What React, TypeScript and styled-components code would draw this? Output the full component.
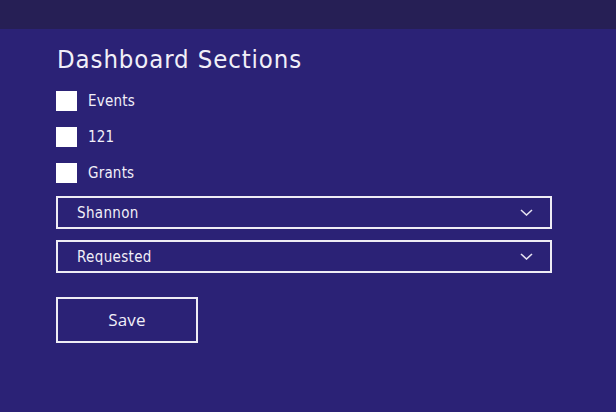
import React from "react";
import styled, { createGlobalStyle } from "styled-components";

const Global = createGlobalStyle`
  html, body { margin: 0; padding: 0; background: #2b2276; }
  body { font-family: "DejaVu Sans Condensed", "DejaVu Sans", sans-serif; }
  * { box-sizing: border-box; }
`;

const Page = styled.div`
  width: 616px;
  height: 412px;
  background: #2b2276;
  display: flex;
  flex-direction: column;
  overflow: hidden;
`;

const TopBar = styled.div`
  height: 29px;
  background: #261f55;
  flex-shrink: 0;
`;

const Content = styled.div`
  padding: 15px 0 0 56px;
  display: flex;
  flex-direction: column;
  width: 552px;
`;

const Title = styled.h1`
  margin: 0 0 0 1px;
  font-family: "DejaVu Sans Condensed", "DejaVu Sans", sans-serif;
  font-weight: 400;
  font-size: 25.5px;
  line-height: 30px;
  color: #f1eff8;
  letter-spacing: 0.9px;
`;

const CheckList = styled.div`
  display: flex;
  flex-direction: column;
  gap: 16px;
  margin-top: 17px;
`;

const CheckRow = styled.label`
  display: flex;
  align-items: center;
  gap: 11px;
  height: 20px;
`;

const Box = styled.span`
  width: 21px;
  height: 20px;
  background: #ffffff;
  flex-shrink: 0;
`;

const CheckLabel = styled.span`
  font-size: 15px;
  color: #f1eff8;
  line-height: 20px;
  letter-spacing: 0.2px;
`;

const Selects = styled.div`
  display: flex;
  flex-direction: column;
  gap: 11px;
  margin-top: 13px;
`;

const Select = styled.div`
  height: 33px;
  border: 2px solid #efedf5;
  display: flex;
  align-items: center;
  justify-content: space-between;
  padding: 0 17px 0 19px;
`;

const SelectText = styled.span`
  font-size: 15px;
  color: #f1eff8;
  letter-spacing: 0.35px;
`;

const SaveButton = styled.button`
  margin-top: 24px;
  width: 142px;
  height: 46px;
  border: 2px solid #efedf5;
  background: transparent;
  color: #f1eff8;
  font-family: "Open Sans", sans-serif;
  font-weight: 500;
  font-size: 17px;
  letter-spacing: 0.2px;
  padding: 0 0 2px 0;
`;

const Chevron = () => (
  <svg width="13" height="7" viewBox="0 0 13 7" fill="none">
    <path d="M1 1l5.5 5 5.5-5" stroke="#e4e1ef" strokeWidth="1.6" />
  </svg>
);

export default function App() {
  return (
    <Page>
      <Global />
      <TopBar />
      <Content>
        <Title>Dashboard Sections</Title>
        <CheckList>
          {["Events", "121", "Grants"].map((l) => (
            <CheckRow key={l}>
              <Box />
              <CheckLabel>{l}</CheckLabel>
            </CheckRow>
          ))}
        </CheckList>
        <Selects>
          {["Shannon", "Requested"].map((v) => (
            <Select key={v}>
              <SelectText>{v}</SelectText>
              <Chevron />
            </Select>
          ))}
        </Selects>
        <SaveButton>Save</SaveButton>
      </Content>
    </Page>
  );
}
